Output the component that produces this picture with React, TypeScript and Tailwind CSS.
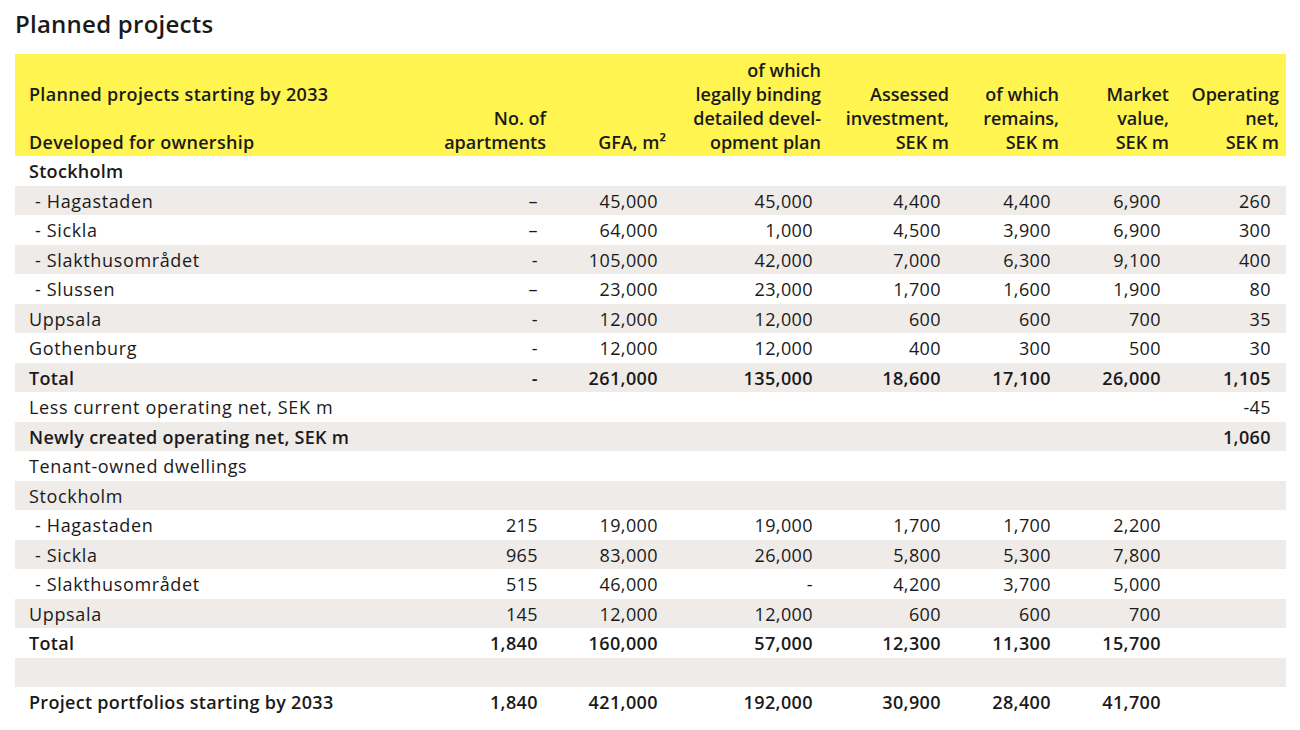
type Row = {
  label: string;
  sub?: boolean;
  bold?: boolean;
  cells: string[];
};

const rows: Row[] = [
  { label: "Stockholm", bold: true, cells: [] },
  { label: "Hagastaden", sub: true, cells: ["–", "45,000", "45,000", "4,400", "4,400", "6,900", "260"] },
  { label: "Sickla", sub: true, cells: ["–", "64,000", "1,000", "4,500", "3,900", "6,900", "300"] },
  { label: "Slakthusområdet", sub: true, cells: ["-", "105,000", "42,000", "7,000", "6,300", "9,100", "400"] },
  { label: "Slussen", sub: true, cells: ["–", "23,000", "23,000", "1,700", "1,600", "1,900", "80"] },
  { label: "Uppsala", cells: ["-", "12,000", "12,000", "600", "600", "700", "35"] },
  { label: "Gothenburg", cells: ["-", "12,000", "12,000", "400", "300", "500", "30"] },
  { label: "Total", bold: true, cells: ["-", "261,000", "135,000", "18,600", "17,100", "26,000", "1,105"] },
  { label: "Less current operating net, SEK m", cells: ["", "", "", "", "", "", "-45"] },
  { label: "Newly created operating net, SEK m", bold: true, cells: ["", "", "", "", "", "", "1,060"] },
  { label: "Tenant-owned dwellings", cells: [] },
  { label: "Stockholm", cells: [] },
  { label: "Hagastaden", sub: true, cells: ["215", "19,000", "19,000", "1,700", "1,700", "2,200", ""] },
  { label: "Sickla", sub: true, cells: ["965", "83,000", "26,000", "5,800", "5,300", "7,800", ""] },
  { label: "Slakthusområdet", sub: true, cells: ["515", "46,000", "-", "4,200", "3,700", "5,000", ""] },
  { label: "Uppsala", cells: ["145", "12,000", "12,000", "600", "600", "700", ""] },
  { label: "Total", bold: true, cells: ["1,840", "160,000", "57,000", "12,300", "11,300", "15,700", ""] },
  { label: "", cells: [] },
  { label: "Project portfolios starting by 2033", bold: true, cells: ["1,840", "421,000", "192,000", "30,900", "28,400", "41,700", ""] },
];

const grid = "grid grid-cols-[415px_123px_120px_155px_128px_110px_110px_110px]";

function HeadCell({ children }: { children: React.ReactNode }) {
  return <div className="flex items-end justify-end text-right pr-[7px]">{children}</div>;
}

export default function App() {
  return (
    <div className="w-[1300px] h-[730px] bg-white text-[#1a1a1a] font-['Open_Sans',sans-serif] overflow-hidden">
      <h1 className="pl-[15px] pt-[7px] h-[54px] text-[24px] leading-[34px] font-semibold tracking-[0.25px]">
        Planned projects
      </h1>
      <div className="ml-[15px] w-[1271px]">
        <div className={`${grid} bg-[#fff450] h-[102px] pt-[4px] pb-[2px] text-[18px] leading-[24px] font-semibold`}>
          <div className="flex items-end pl-[14px] tracking-[0.3px]">
            <div>
              Planned projects starting by 2033
              <br />
              &nbsp;
              <br />
              Developed for ownership
            </div>
          </div>
          <HeadCell>
            No. of
            <br />
            apartments
          </HeadCell>
          <HeadCell>GFA, m²</HeadCell>
          <HeadCell>
            of which
            <br />
            legally binding
            <br />
            detailed devel-
            <br />
            opment plan
          </HeadCell>
          <HeadCell>
            Assessed
            <br />
            investment,
            <br />
            SEK m
          </HeadCell>
          <HeadCell>
            of which
            <br />
            remains,
            <br />
            SEK m
          </HeadCell>
          <HeadCell>
            Market
            <br />
            value,
            <br />
            SEK m
          </HeadCell>
          <HeadCell>
            Operating
            <br />
            net,
            <br />
            SEK m
          </HeadCell>
        </div>
        {rows.map((r, i) => (
          <div
            key={i}
            className={`${grid} h-[29.5px] pt-[2px] items-center text-[18px] tracking-[0.4px] ${i % 2 === 1 ? "bg-[#efebe8]" : "bg-white"} ${r.bold ? "font-semibold" : "font-normal"}`}
          >
            <div className={`${r.sub ? "pl-[20px] whitespace-pre" : "pl-[14px]"} ${r.bold ? "tracking-[0.3px]" : "tracking-[0.65px]"}`}>
              {r.sub ? `- ${r.label}` : r.label}
            </div>
            {Array.from({ length: 7 }).map((_, j) => (
              <div key={j} className="text-right pr-[15px]">
                {r.cells[j] ?? ""}
              </div>
            ))}
          </div>
        ))}
      </div>
    </div>
  );
}
